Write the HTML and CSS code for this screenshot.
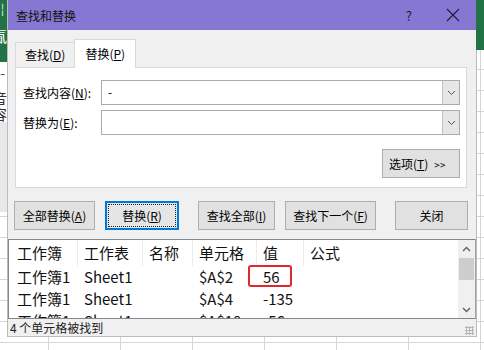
FILE: index.html
```html
<!DOCTYPE html>
<html lang="zh-CN">
<head>
    <meta charset="UTF-8">
    <meta name="viewport" content="width=device-width, initial-scale=1.0">
    <title>查找和替换</title>
    <link rel="stylesheet" href="styles.css">
</head>
<body>
<div class="desk">
    <div class="edge edge-left">
        <div class="ribbon-bit">
            <span class="cut light top">¦</span>
            <span class="cut light">氤</span>
        </div>
        <div class="sheet-bit">
            <span class="cut arrow">-</span>
            <span class="cut">音</span>
            <span class="cut">容</span>
        </div>
        <div class="colbar"></div>
    </div>

    <div class="dialog">
        <div class="titlebar">
            <span class="title">查找和替换</span>
            <span class="help">?</span>
            <span class="close">
                <svg width="14" height="14" viewBox="0 0 14 14"><path d="M1 1L13 13M13 1L1 13" stroke="#1a1a3a" stroke-width="1.1" fill="none"/></svg>
            </span>
        </div>

        <div class="tabs">
            <div class="tab">查找(<u>D</u>)</div>
            <div class="tab active">替换(<u>P</u>)</div>
        </div>

        <div class="panel">
            <div class="field">
                <label>查找内容(<u>N</u>):</label>
                <div class="combo">
                    <span class="value">-</span>
                    <span class="drop"><svg width="9" height="6" viewBox="0 0 9 6"><path d="M1 1L4.5 4.5L8 1" stroke="#555" fill="none"/></svg></span>
                </div>
            </div>
            <div class="field">
                <label>替换为(<u>E</u>):</label>
                <div class="combo">
                    <span class="value"></span>
                    <span class="drop"><svg width="9" height="6" viewBox="0 0 9 6"><path d="M1 1L4.5 4.5L8 1" stroke="#555" fill="none"/></svg></span>
                </div>
            </div>
            <div class="options-row">
                <button class="btn options">选项(<u>T</u>)<span class="more">&gt; &gt;</span></button>
            </div>
        </div>

        <div class="actions">
            <button class="btn b-all">全部替换(<u>A</u>)</button>
            <button class="btn b-one focus">替换(<u>R</u>)</button>
            <button class="btn b-find">查找全部(<u>I</u>)</button>
            <button class="btn b-next">查找下一个(<u>F</u>)</button>
            <button class="btn b-close">关闭</button>
        </div>

        <div class="results">
            <div class="table">
                <div class="th c1">工作簿</div>
                <div class="th">工作表</div>
                <div class="th">名称</div>
                <div class="th">单元格</div>
                <div class="th">值</div>
                <div class="th last">公式</div>

                <div class="td c1">工作簿1</div>
                <div class="td">Sheet1</div>
                <div class="td"></div>
                <div class="td">$A$2</div>
                <div class="td marked">56</div>
                <div class="td"></div>

                <div class="td c1">工作簿1</div>
                <div class="td">Sheet1</div>
                <div class="td"></div>
                <div class="td">$A$4</div>
                <div class="td">-135</div>
                <div class="td"></div>

                <div class="td c1">工作簿1</div>
                <div class="td">Sheet1</div>
                <div class="td"></div>
                <div class="td">$A$10</div>
                <div class="td">-56</div>
                <div class="td"></div>
            </div>
            <div class="scrollbar">
                <span class="arrow-btn"><svg width="9" height="6" viewBox="0 0 9 6"><path d="M1 5L4.5 1.5L8 5" stroke="#606060" stroke-width="1.4" fill="none"/></svg></span>
                <span class="thumb"></span>
                <span class="track"></span>
                <span class="arrow-btn"><svg width="9" height="6" viewBox="0 0 9 6"><path d="M1 1L4.5 4.5L8 1" stroke="#606060" stroke-width="1.4" fill="none"/></svg></span>
            </div>
        </div>

        <div class="status">
            <span>4 个单元格被找到</span>
            <span class="grip"></span>
        </div>
    </div>

    <div class="edge edge-right">
        <div class="ribbon-bit"></div>
    </div>
</div>
</body>
</html>
```

FILE: styles.css
```css
body {
    margin: 0;
    width: 484px;
    height: 350px;
    overflow: hidden;
    font-family: "Noto Sans CJK SC", "Microsoft YaHei", sans-serif;
    font-size: 12px;
    color: #000;
    background-color: #fff;
    background-image:
        linear-gradient(#d6d6d6 1px, transparent 1px),
        linear-gradient(90deg, #d6d6d6 1px, transparent 1px);
    background-size: 72px 21px;
    background-position: 48px 6px;
}

.desk {
    display: grid;
    grid-template-columns: 8px 468px 8px;
    align-items: start;
}

/* what peeks out behind the dialog */
.edge {
    display: flex;
    flex-direction: column;
    overflow: hidden;
}

.edge-left .ribbon-bit {
    height: 62px;
    background: #217346;
    display: flex;
    flex-direction: column;
    gap: 10px;
}

.edge-right .ribbon-bit {
    height: 50px;
    background: #217346;
}

.sheet-bit {
    height: 58px;
    background: #fff;
    display: flex;
    flex-direction: column;
    padding-top: 2px;
}

.colbar {
    height: 90px;
    background: #e8e8e8;
    border-right: 1px solid #c8c8c8;
}

.cut {
    display: block;
    width: 8px;
    height: 17px;
    overflow: hidden;
    text-indent: -8px;
    font-size: 15px;
    line-height: 17px;
    white-space: nowrap;
    color: #333;
}

.cut.light {
    color: #fff;
}

.cut.top {
    text-indent: 1px;
    font-size: 11px;
}

.cut.arrow {
    color: #2b579a;
    text-indent: 0;
    margin-bottom: 8px;
}

/* dialog */
.dialog {
    height: 336px;
    background: #f0f0f0;
    display: flex;
    flex-direction: column;
    box-shadow: 0 0 0 1px #bcbcbc;
}

.titlebar {
    height: 30px;
    background: #8678d2;
    display: flex;
    align-items: center;
    padding-left: 8px;
    flex-shrink: 0;
}

.title {
    font-size: 12px;
    flex: 1;
    color: #111;
}

.help {
    font-size: 13px;
    color: #1a1a3a;
    margin-right: 34px;
}

.close {
    display: flex;
    margin-right: 16px;
}

u {
    text-decoration: underline;
    text-underline-offset: 1px;
}

/* tabs */
.tabs {
    display: flex;
    align-items: flex-end;
    margin: 10px 0 0 7px;
    height: 27px;
    position: relative;
    z-index: 1;
}

.tab {
    height: 24px;
    line-height: 24px;
    padding: 0 9px;
    border: 1px solid #d9d9d9;
    border-bottom: none;
    background: #f0f0f0;
    font-size: 12px;
}

.tab.active {
    height: 28px;
    line-height: 28px;
    padding: 0 10px;
    background: #fff;
    border-color: #d9d9d9;
    margin-bottom: -1px;
    margin-left: -1px;
}

.panel {
    margin: 0 9px 0 7px;
    height: 123px;
    box-sizing: border-box;
    background: #fff;
    border: 1px solid #d9d9d9;
    padding: 12px 6px 0 6px;
    display: flex;
    flex-direction: column;
}

.field {
    display: grid;
    grid-template-columns: 79px 1fr;
    align-items: center;
    margin-bottom: 5px;
}

.field label {
    font-size: 12px;
    padding-left: 1px;
}

.combo {
    height: 25px;
    box-sizing: border-box;
    border: 1px solid #ababab;
    background: #fff;
    display: flex;
    align-items: stretch;
}

.combo .value {
    flex: 1;
    padding-left: 6px;
    line-height: 22px;
    font-size: 12px;
}

.drop {
    width: 16px;
    background: #e6e6e6;
    border-left: 1px solid #c2c2c2;
    display: flex;
    align-items: center;
    justify-content: center;
}

.options-row {
    display: flex;
    justify-content: flex-end;
    margin-top: 9px;
}

/* buttons */
.btn {
    height: 29px;
    box-sizing: border-box;
    border: 1px solid #adadad;
    background: #e1e1e1;
    font-family: inherit;
    font-size: 12px;
    color: #000;
    padding: 0;
    cursor: pointer;
}

.options {
    width: 78px;
    text-align: left;
    padding-left: 6px;
}

.more {
    margin-left: 6px;
    font-size: 10px;
    letter-spacing: -1px;
}

.actions {
    display: flex;
    margin: 13px 0 0 6px;
}

.b-all { width: 81px; }
.b-one { width: 74px; margin-left: 10px; }
.b-find { width: 77px; margin-left: 19px; }
.b-next { width: 91px; margin-left: 10px; }
.b-close { width: 73px; margin-left: 19px; }

.btn.focus {
    border: 2px solid #0078d7;
    outline: 1px dotted #222;
    outline-offset: -4px;
    background: #e5e5e5;
}

/* results list */
.results {
    margin-top: 9px;
    height: 81px;
    box-sizing: border-box;
    background: #fff;
    border: 1px solid #828790;
    border-right: 1px solid #a0a0a0;
    display: flex;
    overflow: hidden;
}

.table {
    flex: 1;
    display: grid;
    grid-template-columns: 69px 65px 50px 64px 47px 1fr;
    grid-auto-rows: 22px;
    grid-template-rows: 26px;
    font-size: 15px;
    color: #111;
    align-content: start;
}

.th,
.td {
    padding-left: 6px;
    white-space: nowrap;
    line-height: 22px;
}

.th {
    line-height: 26px;
    border-right: 1px solid #ececec;
}

.th.last {
    border-right: none;
}

.c1 {
    padding-left: 8px;
}

.marked {
    position: relative;
}

.marked::after {
    content: "";
    position: absolute;
    left: -9px;
    top: -1px;
    width: 44px;
    height: 22px;
    box-sizing: border-box;
    border: 2.5px solid #e0282c;
    border-radius: 3px;
}

.scrollbar {
    width: 17px;
    background: #f0f0f0;
    display: flex;
    flex-direction: column;
}

.arrow-btn {
    height: 17px;
    display: flex;
    align-items: center;
    justify-content: center;
}

.thumb {
    margin: 1px 1px 0;
    height: 22px;
    background: #cdcdcd;
}

.track {
    flex: 1;
}

.status {
    flex: 1;
    display: flex;
    align-items: center;
    justify-content: space-between;
    padding-left: 2px;
    font-size: 12px;
    color: #222;
}

.grip {
    width: 9px;
    height: 9px;
    margin: 5px 2px 0 0;
    background-image: radial-gradient(circle, #b5b5b5 1px, transparent 1.2px);
    background-size: 3px 3px;
}
```
